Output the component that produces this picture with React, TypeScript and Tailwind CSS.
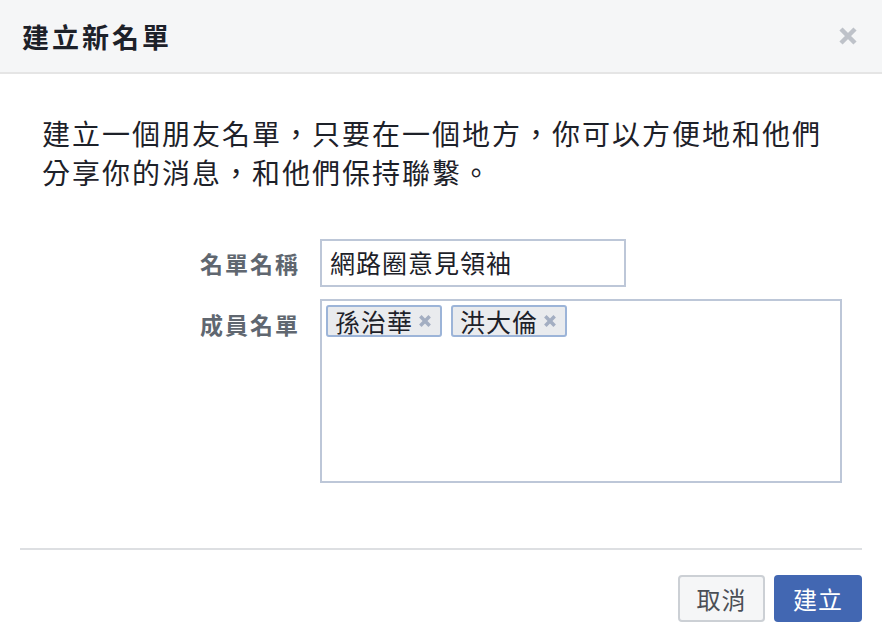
import React from "react";

const FONT = '"Noto Sans CJK TC", "Noto Sans", "Liberation Sans", sans-serif';

function CloseIcon() {
  return (
    <svg width="20" height="20" viewBox="0 0 20 20" aria-hidden="true">
      <path d="M3 3 L17 17 M17 3 L3 17" stroke="#bec2c9" strokeWidth="4.5" strokeLinecap="butt" />
    </svg>
  );
}

function Tag({ name }: { name: string }) {
  return (
    <span className="flex items-center h-[32px] pl-[7px] pr-[8px] gap-[5px] rounded-[3px] border-2 border-[#9cb4d8] bg-[#e9ebee] text-[25px] leading-[28px] tracking-[1px] text-[#1d2129]">
      {name}
      <svg width="14" height="14" viewBox="0 0 12 12" aria-hidden="true">
        <path d="M2 2 L10 10 M10 2 L2 10" stroke="#a3aec2" strokeWidth="3" />
      </svg>
    </span>
  );
}

export default function App() {
  return (
    <div className="w-[882px] h-[642px] bg-white flex flex-col" style={{ fontFamily: FONT }}>
      <div className="h-[74px] shrink-0 bg-[#f5f6f7] border-b-2 border-[#e5e5e5] flex items-center justify-between pl-[22px] pr-[24px]">
        <h1 className="text-[27px] font-bold tracking-[3px] text-[#1d2129] leading-none">建立新名單</h1>
        <CloseIcon />
      </div>

      <div className="pl-[42px] pr-[30px] pt-[40px]">
        <p className="text-[28px] leading-[39px] tracking-[2px] text-[#1d2129]">
          建立一個朋友名單，只要在一個地方，你可以方便地和他們
          <br />
          分享你的消息，和他們保持聯繫。
        </p>
      </div>

      <div className="flex flex-col gap-[12px] pl-[42px] mt-[47px]">
        <div className="flex items-center gap-[20px]">
          <label className="w-[258px] text-right text-[23px] font-bold tracking-[2px] text-[#606770]">名單名稱</label>
          <div className="w-[306px] h-[48px] border-2 border-[#bdc7d8] flex items-center pl-[8px] text-[25px] tracking-[1px] text-[#1d2129]">
            網路圈意見領袖
          </div>
        </div>
        <div className="flex items-start gap-[20px]">
          <label className="w-[258px] pt-[8px] text-right text-[23px] font-bold tracking-[2px] text-[#606770]">成員名單</label>
          <div className="w-[522px] h-[184px] border-2 border-[#bdc7d8] flex items-start gap-[9px] pl-[4px] pt-[4px]">
            <Tag name="孫治華" />
            <Tag name="洪大倫" />
          </div>
        </div>
      </div>

      <div className="mx-[20px] mt-[65px] border-t-2 border-[#dddfe2]" />

      <div className="flex justify-end gap-[9px] pr-[20px] mt-[25px]">
        <button className="w-[87px] h-[47px] rounded-[4px] border-2 border-[#ccd0d5] bg-[#f5f6f7] text-[24px] tracking-[1px] text-[#4b4f56]">
          取消
        </button>
        <button className="w-[88px] h-[47px] rounded-[4px] bg-[#4267b2] text-[24px] tracking-[1px] text-white">
          建立
        </button>
      </div>
    </div>
  );
}
